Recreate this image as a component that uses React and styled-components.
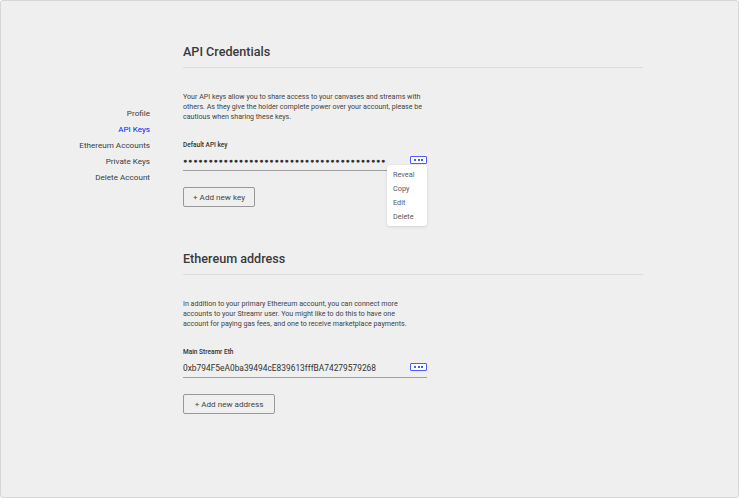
import React from 'react';
import styled, { createGlobalStyle } from 'styled-components';

const GlobalStyle = createGlobalStyle`
  html, body {
    margin: 0;
    padding: 0;
    background: #ffffff;
  }
  body {
    font-family: Roboto, "Noto Sans", sans-serif;
    -webkit-font-smoothing: antialiased;
  }
`;

const Frame = styled.div`
  box-sizing: border-box;
  width: 739px;
  height: 498px;
  background: #efefef;
  border: 1px solid #d6d6d6;
  border-radius: 3px;
  overflow: hidden;
`;

const Layout = styled.div`
  display: grid;
  grid-template-columns: 149px 460px;
  column-gap: 33px;
  padding-top: 43px;
`;

const Sidebar = styled.nav`
  display: flex;
  flex-direction: column;
  align-items: flex-end;
  padding-top: 61px;
`;

const NavItem = styled.div`
  font-size: 8.1px;
  line-height: 16px;
  color: ${props => (props.$active ? '#0324ff' : '#3c3c3c')};
`;

const Content = styled.main`
  display: flex;
  flex-direction: column;
`;

const Section = styled.section`
  display: flex;
  flex-direction: column;
  margin-bottom: ${props => props.$last ? '0' : '44px'};
`;

const Title = styled.h2`
  margin: 0;
  font-size: 12.6px;
  line-height: 16px;
  font-weight: 500;
  color: #3a3a3a;
  padding-bottom: 7px;
  border-bottom: 1px solid #dcdcdc;
`;

const Description = styled.p`
  margin: 24px 0 0;
  font-size: 7.1px;
  line-height: 10px;
  color: #444444;
  white-space: nowrap;
`;

const Label = styled.div`
  margin-top: 18px;
  font-size: 6.5px;
  line-height: 10px;
  font-weight: 500;
  color: #323232;
`;

const Field = styled.div`
  position: relative;
  width: 244px;
  height: 19px;
  margin-top: 1px;
  display: flex;
  align-items: center;
  justify-content: space-between;
  border-bottom: 1px solid #a0a0a0;
`;

const FieldValue = styled.span`
  font-size: ${props => (props.$masked ? '7px' : '8.4px')};
  letter-spacing: ${props => (props.$masked ? '0.85px' : '0')};
  color: #323232;
  white-space: nowrap;
`;

const MoreButton = styled.button`
  box-sizing: border-box;
  width: 17px;
  height: 8px;
  padding: 0;
  display: flex;
  align-items: center;
  justify-content: center;
  gap: 1.5px;
  border: 1px solid #4d5cff;
  border-radius: 1px;
  background: #ffffff;
  cursor: pointer;
  margin-top: -2px;
`;

const Dot = styled.span`
  width: 2px;
  height: 2px;
  border-radius: 50%;
  background: #0324ff;
`;

const Menu = styled.div`
  position: absolute;
  top: 14px;
  right: 0;
  width: 40px;
  padding: 3px 0 2px;
  background: #ffffff;
  border-radius: 3px;
  box-shadow: 0 1px 3px rgba(0, 0, 0, 0.12);
  z-index: 2;
`;

const MenuItem = styled.div`
  padding-left: 6px;
  font-size: 7.3px;
  line-height: 14px;
  color: #5a5a5a;
`;

const AddButton = styled.button`
  align-self: flex-start;
  box-sizing: border-box;
  margin-top: 16px;
  height: 20px;
  width: ${props => props.$width};
  padding: 0;
  border: 1px solid #989898;
  border-radius: 2px;
  background: transparent;
  font-family: inherit;
  font-size: 8.1px;
  color: #444444;
  cursor: pointer;
`;

const MoreMenu = ({ open }) => (
  <>
    <MoreButton>
      <Dot />
      <Dot />
      <Dot />
    </MoreButton>
    {open && (
      <Menu>
        {['Reveal', 'Copy', 'Edit', 'Delete'].map(item => (
          <MenuItem key={item}>{item}</MenuItem>
        ))}
      </Menu>
    )}
  </>
);

const navItems = ['Profile', 'API Keys', 'Ethereum Accounts', 'Private Keys', 'Delete Account'];

const App = () => (
  <>
    <GlobalStyle />
    <Frame>
      <Layout>
        <Sidebar>
          {navItems.map(item => (
            <NavItem key={item} $active={item === 'API Keys'}>{item}</NavItem>
          ))}
        </Sidebar>

        <Content>
          <Section>
            <Title>API Credentials</Title>
            <Description>
              Your API keys allow you to share access to your canvases and streams with<br />
              others. As they give the holder complete power over your account, please be<br />
              cautious when sharing these keys.
            </Description>
            <Label>Default API key</Label>
            <Field>
              <FieldValue $masked>{'●'.repeat(40)}</FieldValue>
              <MoreMenu open />
            </Field>
            <AddButton $width="72px">+ Add new key</AddButton>
          </Section>

          <Section $last>
            <Title>Ethereum address</Title>
            <Description>
              In addition to your primary Ethereum account, you can connect more<br />
              accounts to your Streamr user. You might like to do this to have one<br />
              account for paying gas fees, and one to receive marketplace payments.
            </Description>
            <Label>Main Streamr Eth</Label>
            <Field>
              <FieldValue>0xb794F5eA0ba39494cE839613fffBA74279579268</FieldValue>
              <MoreMenu />
            </Field>
            <AddButton $width="92px">+ Add new address</AddButton>
          </Section>
        </Content>
      </Layout>
    </Frame>
  </>
);

export default App;
